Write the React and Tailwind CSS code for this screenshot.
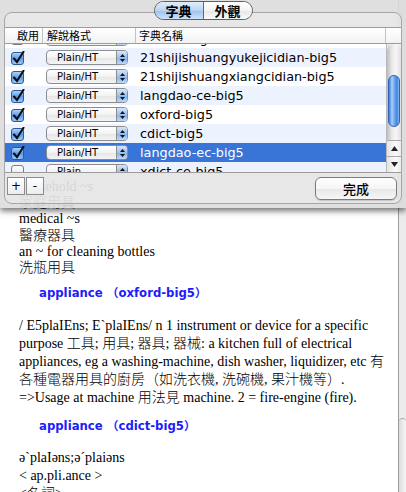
import React from "react";

const UI = "font-['DejaVu_Sans','Noto_Sans_CJK_TC',sans-serif]";
const CJK = "font-['Noto_Sans_CJK_TC','DejaVu_Sans',sans-serif]";

const rows = [
  { name: "cn-en-langdao", fmt: "Plain/HT", on: false },
  { name: "21shijishuangyukejicidian-big5", fmt: "Plain/HT", on: true },
  { name: "21shijishuangxiangcidian-big5", fmt: "Plain/HT", on: true },
  { name: "langdao-ce-big5", fmt: "Plain/HT", on: true },
  { name: "oxford-big5", fmt: "Plain/HT", on: true },
  { name: "cdict-big5", fmt: "Plain/HT", on: true },
  { name: "langdao-ec-big5", fmt: "Plain/HT", on: true, sel: true },
  { name: "xdict-ce-big5", fmt: "Plain", on: false },
];

function Check({ on }) {
  if (!on)
    return (
      <svg width="13" height="13" viewBox="0 0 13 13">
        <defs>
          <linearGradient id="cbu" x1="0" y1="0" x2="0" y2="1">
            <stop offset="0" stopColor="#ffffff" />
            <stop offset="1" stopColor="#e2e2e2" />
          </linearGradient>
        </defs>
        <rect x="0.5" y="0.5" width="12" height="12" rx="2.5" fill="url(#cbu)" stroke="#7d7d7d" />
      </svg>
    );
  return (
    <svg width="14" height="14" viewBox="0 0 14 14">
      <defs>
        <linearGradient id="cbc" x1="0" y1="0" x2="0" y2="1">
          <stop offset="0" stopColor="#b6d6fb" />
          <stop offset="0.5" stopColor="#5c9cec" />
          <stop offset="1" stopColor="#9ccbfc" />
        </linearGradient>
      </defs>
      <rect x="0.5" y="1.5" width="12" height="12" rx="2.5" fill="url(#cbc)" stroke="#2b5a98" />
      <path d="M3 7.5 L6 11 L12.5 0.8" stroke="#0d0d0d" strokeWidth="2.1" fill="none" strokeLinecap="round" />
    </svg>
  );
}

function Popup({ text }) {
  return (
    <div className="flex h-[15px] w-[82px] overflow-hidden rounded-[4px] border border-[#8d8d8d] bg-[linear-gradient(to_bottom,#ffffff,#f3f3f3_50%,#e6e6e6_51%,#f4f4f4)]">
      <div className={`flex-1 pl-[10px] text-[10px] leading-[13px] text-black ${UI}`}>{text}</div>
      <div className="flex w-[11px] flex-col items-center justify-center gap-[2px] border-l border-[#8d8d8d] bg-[linear-gradient(to_bottom,#d3e5fb,#9cc3f1_50%,#7fb0ec_51%,#bcd8fa)]">
        <svg width="5" height="3" viewBox="0 0 5 3"><path d="M0 3 L2.5 0 L5 3 Z" fill="#111" /></svg>
        <svg width="5" height="3" viewBox="0 0 5 3"><path d="M0 0 L2.5 3 L5 0 Z" fill="#111" /></svg>
      </div>
    </div>
  );
}

function Row({ r, i }) {
  const bg = r.sel ? "bg-[#3875d7]" : i % 2 === 1 ? "bg-[#edf3fe]" : "bg-white";
  return (
    <div className={`flex h-[19px] items-center ${bg}`}>
      <div className="flex w-[38px] items-center pl-[6px]">
        <Check on={r.on} />
      </div>
      <div className="w-[93px] pl-[3px]">
        <Popup text={r.fmt} />
      </div>
      <div className={`flex-1 whitespace-nowrap pl-[4px] text-[12.8px] leading-[19px] ${UI} ${r.sel ? "text-white" : "text-black"}`}>
        {r.name}
      </div>
    </div>
  );
}

function TableScroll() {
  return (
    <div className="flex w-[15px] flex-col border-l border-[#b9b9b9] bg-[linear-gradient(to_right,#e4e4e4,#fafafa_60%,#ececec)]">
      <div className="flex flex-1 flex-col rounded-t-[8px] rounded-b-[3px] bg-[linear-gradient(to_right,#bdbdbd,#e9e9e9_35%,#f7f7f7_65%,#dedede)] px-[1px] pt-[31px]">
        <div className="h-[52px] rounded-full border border-[#2f62b3] bg-[linear-gradient(to_right,#3b7ddf,#a9cff9_30%,#6ea6ef_55%,#3f82e2_80%,#8fbdf6)]" />
      </div>
      <div className="flex h-[16px] items-center justify-center border-t border-[#a9a9a9]">
        <svg width="7" height="5" viewBox="0 0 7 5"><path d="M0 5 L3.5 0 L7 5 Z" fill="#222" /></svg>
      </div>
      <div className="flex h-[16px] items-center justify-center border-t border-[#a9a9a9]">
        <svg width="7" height="5" viewBox="0 0 7 5"><path d="M0 0 L3.5 5 L7 0 Z" fill="#222" /></svg>
      </div>
    </div>
  );
}

function Sheet() {
  return (
    <div className="absolute left-0 top-0 h-[208px] w-[406px] bg-[#dcdcdc]/90 px-[4px] pt-[12px] shadow-[0_3px_6px_rgba(0,0,0,0.55)]">
      <div className="flex h-[192px] flex-col rounded-[8px] border border-[#a6a6a6] bg-white/25">
        <div className={`-mt-[12px] flex h-[19px] self-center overflow-hidden rounded-full border border-[#5f5f5f] text-[13px] font-bold leading-[17px] text-black ${CJK}`}>
          <div className="flex w-[48px] items-center justify-center bg-[linear-gradient(to_bottom,#e2eefc,#b9d4f4_50%,#9cc0ee_51%,#cfe3fb)]">字典</div>
          <div className="flex w-[49px] items-center justify-center border-l border-[#6a6a6a] bg-[linear-gradient(to_bottom,#ffffff,#f4f4f4_50%,#e7e7e7_51%,#fafafa)]">外觀</div>
        </div>
        <div className="mt-[7px] flex flex-col">
          <div className={`flex h-[17px] items-center border-y border-[#9c9c9c] bg-[linear-gradient(to_bottom,#ffffff,#f2f2f2)] text-[11px] leading-[14px] text-black ${CJK}`}>
            <div className="h-full w-[38px] border-r border-[#c2c2c2] pl-[12px]">啟用</div>
            <div className="h-full w-[93px] border-r border-[#c2c2c2] pl-[4px]">解說格式</div>
            <div className="h-full flex-1 border-r border-[#c2c2c2] pl-[3px]">字典名稱</div>
            <div className="w-[15px]" />
          </div>
          <div className="flex h-[129px] border-b border-[#9c9c9c]">
            <div className="flex-1 overflow-hidden bg-white">
              <div className="-mt-[15px]">
                {rows.map((r, i) => (
                  <Row key={i} r={r} i={i} />
                ))}
              </div>
            </div>
            <TableScroll />
          </div>
        </div>
        <div className="mt-[4px] flex items-start pl-[2px] pr-[4px]">
          <div className={`flex h-[18px] w-[18px] items-center justify-center border border-[#8b8b8b] bg-[linear-gradient(to_bottom,#ffffff,#ececec)] text-[12px] leading-none text-black ${UI}`}>+</div>
          <div className={`ml-[1px] flex h-[18px] w-[18px] items-center justify-center border border-[#8b8b8b] bg-[linear-gradient(to_bottom,#ffffff,#ececec)] text-[12px] leading-none text-black ${UI}`}>-</div>
          <div className="flex-1" />
          <div className={`flex h-[23px] w-[82px] items-center justify-center rounded-[6px] border border-[#7a7a7a] bg-[linear-gradient(to_bottom,#ffffff,#f5f5f5_50%,#e6e6e6_51%,#f7f7f7)] text-[13px] font-medium text-black shadow-[0_1px_1px_rgba(0,0,0,0.15)] ${CJK}`}>
            完成
          </div>
        </div>
      </div>
    </div>
  );
}

export default function App() {
  return (
    <div className="relative flex h-[492px] w-[406px] overflow-hidden bg-white">
      <div className={`flex-1 overflow-hidden whitespace-nowrap pl-[19px] pt-[179px] text-[14px] font-light text-black font-['Liberation_Serif','Noto_Sans_CJK_TC',serif]`}>
        <div className="leading-[16.2px] [&>div]:h-[16.2px]">
          <div>household ~s</div>
          <div>家庭用具</div>
          <div>medical ~s</div>
          <div>醫療器具</div>
          <div>an ~ for cleaning bottles</div>
          <div>洗瓶用具</div>
        </div>
        <div className={`mt-[9px] h-[16px] pl-[20px] text-[11.7px] font-bold leading-[16px] text-[#1d1dfa] font-['DejaVu_Sans','Noto_Sans_CJK_TC',sans-serif]`}>
          appliance （oxford-big5）
        </div>
        <div className="mt-[16px] leading-[18px] [&>div]:h-[18px]">
          <div>/ E5plaIEns; E`plaIEns/ n 1 instrument or device for a specific</div>
          <div>purpose 工具; 用具; 器具; 器械: a kitchen full of electrical</div>
          <div>appliances, eg a washing-machine, dish washer, liquidizer, etc 有</div>
          <div>各種電器用具的廚房（如洗衣機, 洗碗機, 果汁機等）.</div>
          <div>=&gt;Usage at machine 用法見 machine. 2 = fire-engine (fire).</div>
        </div>
        <div className={`mt-[11px] h-[16px] pl-[20px] text-[11.7px] font-bold leading-[16px] text-[#1d1dfa] font-['DejaVu_Sans','Noto_Sans_CJK_TC',sans-serif]`}>
          appliance （cdict-big5）
        </div>
        <div className="mt-[15px] leading-[18px] [&>div]:h-[18px]">
          <div>ə`plaIəns;ə´plaiəns</div>
          <div>&lt; ap.pli.ance &gt;</div>
          <div>&lt;名詞&gt;</div>
        </div>
      </div>
      <div className="flex w-[8px] flex-col border-l border-[#9d9d9d] bg-[#ececec]">
        <div className="h-[418px]" />
        <div className="flex-1 rounded-t-[6px] border-t border-[#a9a9a9] bg-[linear-gradient(to_right,#dcdcdc,#f6f6f6)]" />
      </div>
      <Sheet />
    </div>
  );
}
